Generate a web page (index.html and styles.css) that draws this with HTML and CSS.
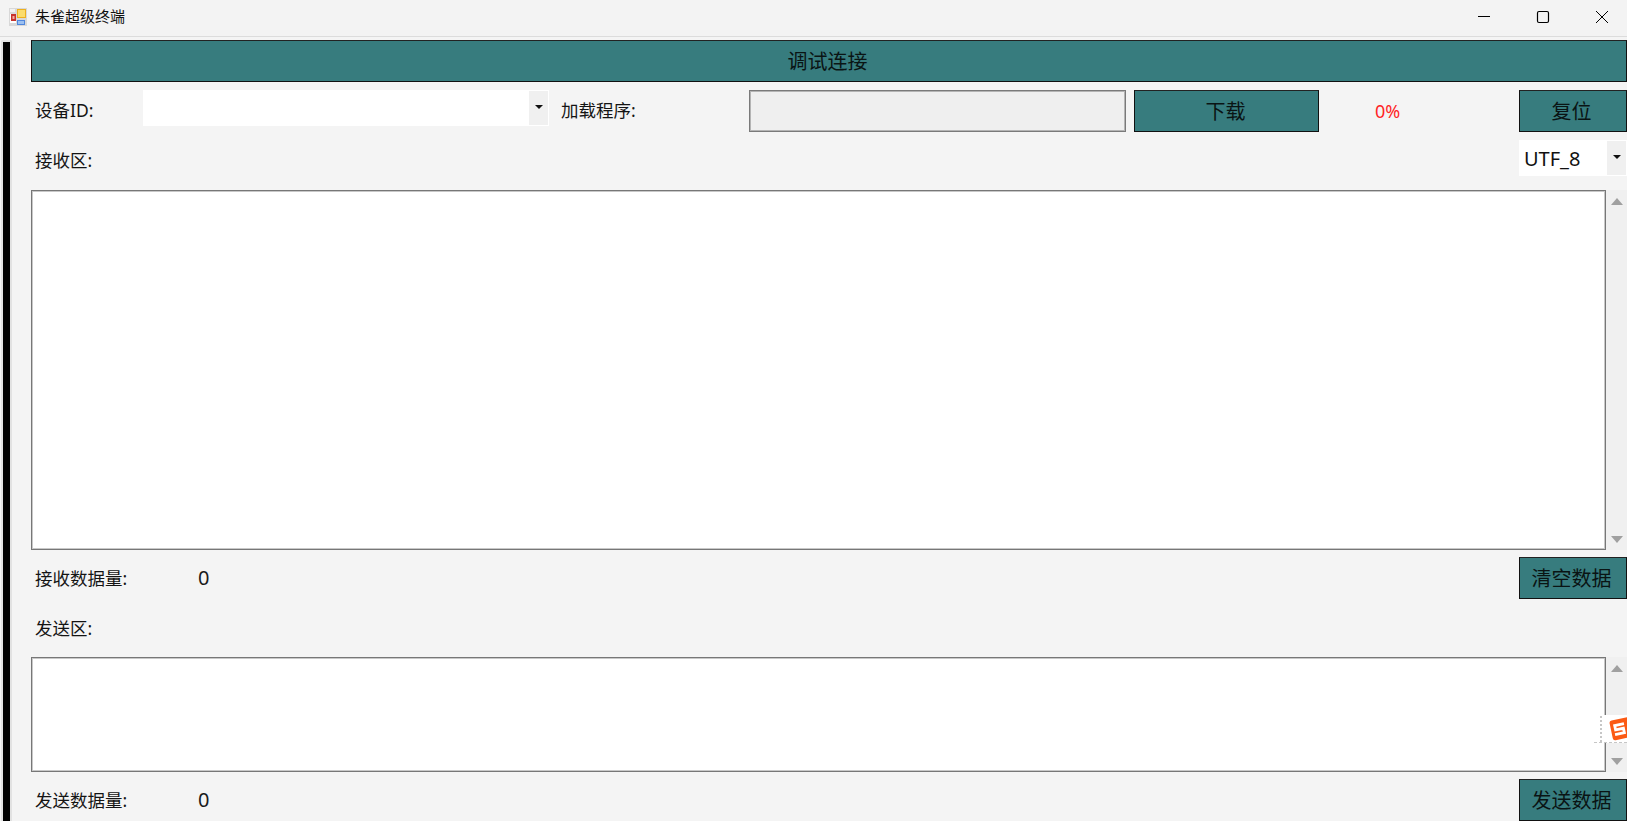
FILE: index.html
```html
<!DOCTYPE html>
<html lang="zh-CN">
<head>
<meta charset="utf-8">
<title>朱雀超级终端</title>
<link rel="stylesheet" href="styles.css">
</head>
<body>
<header class="titlebar">
  <div class="title-left">
    <svg class="app-icon" width="18" height="18" viewBox="0 0 18 18">
      <rect width="18" height="18" fill="#d8d8d8"/>
      <rect x="1" y="6" width="6" height="9" fill="#fff"/>
      <rect x="2" y="6" width="5" height="7" fill="#c8322c"/>
      <rect x="3.5" y="8" width="2" height="3" fill="#f0b0a0"/>
      <rect x="8" y="1" width="9" height="9" fill="#eeb01e"/>
      <rect x="9" y="2" width="7" height="7" fill="#fbdc6c"/>
      <rect x="8" y="12" width="8" height="5" fill="#4f86dc"/>
      <rect x="9" y="13" width="6" height="3" fill="#9cc0f0"/>
      <rect x="1" y="1" width="5" height="3" fill="#f2f2f2"/>
    </svg>
    <span class="app-title">朱雀超级终端</span>
  </div>
  <div class="win-controls">
    <svg class="win-btn" width="14" height="14" viewBox="0 0 14 14"><path d="M1 6.5H13" stroke="#000" stroke-width="1" fill="none"/></svg>
    <svg class="win-btn" width="14" height="14" viewBox="0 0 14 14"><rect x="1.5" y="1.5" width="11" height="11" rx="1.5" stroke="#000" stroke-width="1.2" fill="none"/></svg>
    <svg class="win-btn" width="14" height="14" viewBox="0 0 14 14"><path d="M1 1L13 13M13 1L1 13" stroke="#000" stroke-width="1" fill="none"/></svg>
  </div>
</header>
<div class="workspace">
  <aside class="rail"><div class="rail-bar"></div></aside>
  <main class="main">
    <button class="banner btn">调试连接</button>

    <div class="row row-top">
      <label class="label label-id">设备ID:</label>
      <div class="combo combo-id">
        <span class="combo-value"></span>
        <span class="combo-arrow"><i class="caret"></i></span>
      </div>
      <label class="label label-load">加载程序:</label>
      <div class="file-field"></div>
      <button class="btn btn-download">下载</button>
      <span class="percent">0%</span>
      <button class="btn btn-side">复位</button>
    </div>

    <div class="row row-recv-head">
      <label class="label">接收区:</label>
      <div class="combo combo-enc">
        <span class="combo-value">UTF_8</span>
        <span class="combo-arrow"><i class="caret"></i></span>
      </div>
    </div>

    <div class="text-block text-recv">
      <textarea class="text-area"></textarea>
      <div class="scroll"><i class="arrow-up"></i><i class="arrow-down"></i></div>
    </div>

    <div class="row row-count">
      <label class="label label-count">接收数据量:</label>
      <span class="count">0</span>
      <button class="btn btn-side">清空数据</button>
    </div>

    <div class="row row-send-head">
      <label class="label">发送区:</label>
    </div>

    <div class="text-block text-send">
      <textarea class="text-area"></textarea>
      <div class="scroll"><i class="arrow-up"></i><i class="arrow-down"></i></div>
      <div class="ime-badge">
        <svg width="22" height="24" viewBox="0 0 22 24">
          <rect x="2" y="2" width="21" height="20" rx="2.5" fill="#fb5a14" transform="rotate(-12 11 12)"/>
          <path d="M16 7.5H6.5V12H14.5V16.5H5" fill="none" stroke="#fff" stroke-width="2.8" transform="rotate(-12 11 12)"/>
        </svg>
      </div>
    </div>

    <div class="row row-count">
      <label class="label label-count">发送数据量:</label>
      <span class="count">0</span>
      <button class="btn btn-side">发送数据</button>
    </div>
  </main>
</div>
</body>
</html>
```
FILE: styles.css
```css
* { box-sizing: border-box; }
html, body { margin: 0; height: 100%; overflow: hidden; }
body {
  background: #f4f4f4;
  color: #1a1a1a;
  font-family: "Noto Sans", "Noto Sans CJK SC", sans-serif;
  width: 1627px;
  height: 821px;
}
.titlebar {
  height: 37px;
  background: #f3f3f3;
  border-bottom: 1px solid #dcdcdc;
  display: flex;
  justify-content: space-between;
  align-items: center;
}
.title-left { display: flex; align-items: center; padding-left: 9px; }
.app-icon { display: block; margin-top: -3px; }
.app-title { font-size: 15px; margin-left: 8px; margin-top: -5px; color: #111; line-height: 20px; }
.win-controls { display: flex; gap: 45px; padding-right: 18px; margin-top: -2px; }
.win-btn { display: block; }

.workspace { display: flex; height: 784px; }
.rail { width: 31px; padding: 3px 0 0 1px; flex: none; }
.rail-bar {
  width: 11px;
  height: 100%;
  background: #000;
  border: 2px solid #e2e2e2;
  border-bottom: 0;
  border-radius: 2px 2px 0 0;
}
.main { width: 1596px; padding-top: 3px; display: flex; flex-direction: column; }

.btn {
  background: #377c7e;
  border: 1px solid #111;
  border-top-color: #222;
  color: #0a1414;
  font-family: inherit;
  font-size: 20px;
  line-height: 1;
  padding: 0;
  height: 42px;
  flex: none;
  border-radius: 0;
}
.banner { width: 100%; padding: 1px 3px 0 0; font-size: 20px; }
.row { display: flex; margin-top: 8px; flex: none; }
.label { font-size: 17.5px; line-height: 24px; padding-left: 4px; color: #141414; white-space: nowrap; }

.row-top { height: 42px; align-items: flex-start; }
.label-id { width: 112px; padding-top: 8px; }
.combo { background: #fff; display: flex; justify-content: space-between; height: 36px; flex: none; }
.combo-id { width: 406px; }
.combo-value { font-size: 20px; line-height: 38px; padding-left: 5px; white-space: nowrap; color: #111; }
.combo-arrow {
  width: 19px;
  background: #f0f0f0;
  margin: 1px 1px 1px 0;
  display: flex;
  align-items: center;
  justify-content: center;
}
.caret {
  display: block;
  width: 0; height: 0;
  border-left: 4px solid transparent;
  border-right: 4px solid transparent;
  border-top: 4.5px solid #111;
  margin-top: -2px;
}
.label-load { width: 200px; padding-left: 12px; padding-top: 8px; }
.file-field {
  width: 377px;
  height: 42px;
  background: #efefef;
  border: 1px solid #7a7a7a;
  box-shadow: inset 0 0 0 1px #b4b4b4;
  flex: none;
}
.btn-download { width: 185px; margin-left: 8px; padding: 1px 2px 0 0; }
.percent { width: 200px; text-align: left; padding-left: 56px; font-size: 18px; line-height: 42px; color: #ff2426; }
.btn-side { width: 108px; margin-left: auto; padding: 1px 3px 0 0; }

.row-recv-head { height: 36px; align-items: flex-start; justify-content: space-between; }
.row-recv-head .label { padding-top: 8px; }
.combo-enc { width: 108px; }

.text-block { display: flex; position: relative; flex: none; }
.text-recv { height: 360px; margin-top: 14px; }
.text-send { height: 115px; margin-top: 0; }
.text-block + .row { margin-top: 7px; }
.text-area {
  flex: none;
  width: 1575px;
  height: 100%;
  background: #fff;
  border: 1px solid #777;
  box-shadow: inset 0 0 0 1px #c8c8c8;
  resize: none;
  outline: none;
  margin: 0;
  padding: 0;
  display: block;
  overflow: hidden;
}
.scroll {
  width: 21px;
  background: #f0f0f0;
  position: relative;
  display: flex;
  flex-direction: column;
  justify-content: space-between;
  align-items: center;
  padding: 8px 0 7px;
}
.arrow-up, .arrow-down {
  display: block;
  width: 0; height: 0;
  border-left: 6px solid transparent;
  border-right: 6px solid transparent;
}
.arrow-up { border-bottom: 7px solid #a0a0a0; }
.arrow-down { border-top: 7px solid #a0a0a0; }
.ime-badge {
  position: absolute;
  right: 0;
  top: 58px;
  width: 33px;
  height: 28px;
  background: #fff;
  border-bottom: 1px dashed #c6c6c6;
  padding: 2px 0 0 15px;
  overflow: hidden;
}
.ime-badge::before {
  content: "";
  position: absolute;
  left: 6px;
  top: 1px;
  bottom: 0;
  border-left: 2px dotted #c6c6c6;
}
.ime-badge svg { display: block; }

.row-count { height: 42px; align-items: center; }
.label-count { width: 167px; }
.count { font-size: 20px; line-height: 24px; }
.row-send-head { height: 58px; margin-top: 0; align-items: flex-start; padding-top: 17px; }
```
